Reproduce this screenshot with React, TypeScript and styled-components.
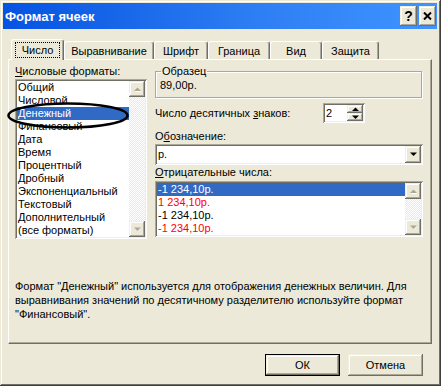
import React from "react"
import styled, { createGlobalStyle, css } from "styled-components"

const formats = [
    "Общий",
    "Числовой",
    "Денежный",
    "Финансовый",
    "Дата",
    "Время",
    "Процентный",
    "Дробный",
    "Экспоненциальный",
    "Текстовый",
    "Дополнительный",
    "(все форматы)",
]

const negatives = [
    { text: "-1 234,10р.", red: false },
    { text: "1 234,10р.", red: true },
    { text: "-1 234,10р.", red: false },
    { text: "-1 234,10р.", red: true },
]

const tabs = [
    { label: "Число", width: 53 },
    { label: "Выравнивание", width: 90 },
    { label: "Шрифт", width: 54 },
    { label: "Граница", width: 62 },
    { label: "Вид", width: 52 },
    { label: "Защита", width: 57 },
]

const Arrow = ({ dir, disabled }: { dir: "up" | "down"; disabled?: boolean }) => (
    <svg width="7" height="5" viewBox="0 0 7 5">
        {disabled && (
            <path
                d={dir === "up" ? "M1 5 L4 2 L7 5 Z" : "M1 1 L7 1 L4 4 Z"}
                fill="#fff"
            />
        )}
        <path
            d={dir === "up" ? "M0 4 L3.5 0.5 L7 4 Z" : "M0 0.5 L7 0.5 L3.5 4 Z"}
            fill={disabled ? "#ACA899" : "#000"}
        />
    </svg>
)

const ScrollBar = () => (
    <Scroll>
        <ScrollButton><Arrow dir="up" disabled /></ScrollButton>
        <Track />
        <ScrollButton><Arrow dir="down" disabled /></ScrollButton>
    </Scroll>
)

export default function App() {
    return <>
        <GlobalStyle />
        <Window>
            <TitleBar>
                <Title>Формат ячеек</Title>
                <CaptionButtons>
                    <CaptionButton>?</CaptionButton>
                    <CaptionButton>
                        <svg width="9" height="8" viewBox="0 0 9 8">
                            <path d="M1 0.5 L8 7.5 M8 0.5 L1 7.5" stroke="#000" strokeWidth="2" />
                        </svg>
                    </CaptionButton>
                </CaptionButtons>
            </TitleBar>
            <Body>
                <TabsRow>
                    {tabs.map((t, i) => (
                        <Tab key={t.label} $w={t.width} $active={i === 0}>
                            {i === 0 ? <FocusLabel>{t.label}</FocusLabel> : t.label}
                        </Tab>
                    ))}
                </TabsRow>
                <Panel>
                    <Columns>
                        <LeftColumn>
                            <Label><u>Ч</u>исловые форматы:</Label>
                            <FormatList>
                                <Items>
                                    {formats.map((f, i) => (
                                        <Item key={f} $selected={i === 2}>{f}</Item>
                                    ))}
                                </Items>
                                <ScrollBar />
                            </FormatList>
                            <Circle width="124" height="30" viewBox="0 0 124 30">
                                <ellipse cx="62" cy="14.5" rx="59.5" ry="12" fill="none" stroke="#000" strokeWidth="2.6" />
                            </Circle>
                        </LeftColumn>
                        <RightColumn>
                            <Sample>
                                <Legend>Образец</Legend>
                                <SampleText>89,00р.</SampleText>
                            </Sample>
                            <DecimalRow>
                                <Label>Число десятичных <u>з</u>наков:</Label>
                                <Spinner>
                                    <SpinValue>2</SpinValue>
                                    <SpinButtons>
                                        <SpinButton><Arrow dir="up" /></SpinButton>
                                        <SpinButton><Arrow dir="down" /></SpinButton>
                                    </SpinButtons>
                                </Spinner>
                            </DecimalRow>
                            <Label $top={7}>О<u>б</u>означение:</Label>
                            <Combo>
                                <ComboValue>р.</ComboValue>
                                <DropButton><Arrow dir="down" /></DropButton>
                            </Combo>
                            <Label $top={1}><u>О</u>трицательные числа:</Label>
                            <NegativeList>
                                <Items>
                                    {negatives.map((n, i) => (
                                        <Item key={i} $selected={i === 0} $red={n.red}>{n.text}</Item>
                                    ))}
                                </Items>
                                <ScrollBar />
                            </NegativeList>
                        </RightColumn>
                    </Columns>
                    <Description>
                        Формат "Денежный" используется для отображения денежных величин. Для<br />
                        выравнивания значений по десятичному разделителю используйте формат<br />
                        "Финансовый".
                    </Description>
                </Panel>
            </Body>
            <ButtonRow>
                <DialogButton $default>ОК</DialogButton>
                <DialogButton>Отмена</DialogButton>
            </ButtonRow>
        </Window>
    </>
}

const GlobalStyle = createGlobalStyle`
    html, body {
        margin: 0;
        padding: 0;
        background: #fff;
    }
    body {
        font-family: "Liberation Sans", Arial, sans-serif;
        font-size: 11px;
        color: #000;
    }
    #root {
        width: 441px;
        height: 388px;
        overflow: hidden;
    }
`

const raised = css`
    background: #ECE9D8;
    box-shadow: inset -1px -1px 0 #716F64, inset 1px 1px 0 #F1EFE2, inset -2px -2px 0 #ACA899, inset 2px 2px 0 #fff;
`

const sunken = css`
    background: #fff;
    box-shadow: inset 1px 1px 0 #ACA899, inset -1px -1px 0 #fff, inset 2px 2px 0 #716F64, inset -2px -2px 0 #F1EFE2;
`

const Window = styled.div`
    width: 441px;
    height: 386px;
    box-sizing: border-box;
    padding: 3px 4px 4px 3px;
    background: #ECE9D8;
    box-shadow: inset -1px -1px 0 #404040, inset 1px 1px 0 #ECE9D8, inset -2px -2px 0 #716F64, inset 2px 2px 0 #fff;
    display: flex;
    flex-direction: column;
`

const TitleBar = styled.div`
    height: 26px;
    flex-shrink: 0;
    display: flex;
    align-items: center;
    justify-content: space-between;
    background: linear-gradient(to right, #0553E1, #2F7FF4 60%, #3F94FF);
`

const Title = styled.div`
    padding-left: 2px;
    color: #fff;
    font-weight: bold;
    font-size: 13px;
`

const CaptionButtons = styled.div`
    display: flex;
    gap: 2px;
    padding-right: 1px;
`

const CaptionButton = styled.div`
    ${raised};
    width: 17px;
    height: 20px;
    display: flex;
    align-items: center;
    justify-content: center;
    font-weight: bold;
    font-size: 14px;
`

const Body = styled.div`
    display: flex;
    flex-direction: column;
    padding-left: 5px;
`

const TabsRow = styled.div`
    margin-top: 10px;
    height: 20px;
    display: flex;
    align-items: flex-end;
    padding-left: 3px;
    position: relative;
    z-index: 1;
`

const Tab = styled.div<{ $w: number; $active?: boolean }>`
    width: ${p => p.$w}px;
    height: ${p => (p.$active ? 21 : 18)}px;
    margin-bottom: ${p => (p.$active ? -1 : 0)}px;
    box-sizing: border-box;
    background: #ECE9D8;
    border-top: 1px solid #fff;
    border-left: 1px solid #fff;
    border-right: 1px solid #716F64;
    box-shadow: inset -1px 0 0 #ACA899;
    border-radius: 3px 3px 0 0;
    display: flex;
    align-items: ${p => (p.$active ? "flex-start" : "center")};
    padding-top: ${p => (p.$active ? 2 : 0)}px;
    justify-content: center;
    white-space: nowrap;
`

const FocusLabel = styled.span`
    padding: 0 6px;
    line-height: 14px;
    border: 1px dotted #000;
`

const Panel = styled.div`
    width: 424px;
    height: 285px;
    box-sizing: border-box;
    border-top: 1px solid #fff;
    border-left: 1px solid #fff;
    border-right: 1px solid #716F64;
    border-bottom: 1px solid #716F64;
    box-shadow: inset -1px -1px 0 #ACA899;
    padding: 5px 0 0 6px;
    display: flex;
    flex-direction: column;
`

const Columns = styled.div`
    display: flex;
    gap: 8px;
`

const LeftColumn = styled.div`
    width: 132px;
    display: flex;
    flex-direction: column;
    position: relative;
`

const RightColumn = styled.div`
    width: 268px;
    display: flex;
    flex-direction: column;
`

const Label = styled.div<{ $top?: number }>`
    height: 13px;
    line-height: 13px;
    margin-top: ${p => p.$top ?? 0}px;
    white-space: nowrap;
`

const ListBox = styled.div`
    ${sunken};
    box-sizing: border-box;
    padding: 2px;
    display: flex;
`

const FormatList = styled(ListBox)`
    margin-top: 1px;
    height: 160px;
`

const NegativeList = styled(ListBox)`
    margin-top: 2px;
    height: 56px;
`

const Items = styled.div`
    flex: 1;
    display: flex;
    flex-direction: column;
    overflow: hidden;
`

const Item = styled.div<{ $selected?: boolean; $red?: boolean }>`
    height: 13px;
    flex-shrink: 0;
    line-height: 13px;
    padding-left: 1px;
    white-space: nowrap;
    color: ${p => (p.$selected ? "#fff" : p.$red ? "#FF0000" : "#000")};
    background: ${p => (p.$selected ? "#316AC5" : "transparent")};
`

const Scroll = styled.div`
    width: 16px;
    display: flex;
    flex-direction: column;
`

const ScrollButton = styled.div`
    ${raised};
    height: 16px;
    flex-shrink: 0;
    display: flex;
    align-items: center;
    justify-content: center;
`

const Track = styled.div`
    flex: 1;
    background-color: #fff;
    background-image: repeating-conic-gradient(#ECE9D8 0 25%, #fff 0 50%);
    background-size: 2px 2px;
`

const Circle = styled.svg`
    position: absolute;
    left: -9px;
    top: 36px;
    pointer-events: none;
`

const Sample = styled.fieldset`
    margin: 0;
    padding: 0 0 5px 4px;
    width: 267px;
    box-sizing: border-box;
    border: 1px solid #ACA899;
    box-shadow: inset 1px 1px 0 #fff, 1px 1px 0 #fff;
    min-inline-size: 0;
`

const Legend = styled.legend`
    padding: 0 1px;
    margin-left: 1px;
    line-height: 13px;
`

const SampleText = styled.div`
    height: 13px;
    line-height: 13px;
    margin-top: 1px;
`

const DecimalRow = styled.div`
    margin-top: 5px;
    height: 20px;
    display: flex;
    align-items: center;
    & > ${Label} {
        width: 168px;
    }
`

const Spinner = styled.div`
    ${sunken};
    width: 42px;
    height: 20px;
    box-sizing: border-box;
    padding: 2px;
    display: flex;
`

const SpinValue = styled.div`
    flex: 1;
    padding-left: 1px;
    line-height: 16px;
`

const SpinButtons = styled.div`
    width: 16px;
    display: flex;
    flex-direction: column;
`

const SpinButton = styled.div`
    ${raised};
    height: 8px;
    display: flex;
    align-items: center;
    justify-content: center;
`

const Combo = styled.div`
    ${sunken};
    margin-top: 1px;
    height: 21px;
    box-sizing: border-box;
    padding: 2px;
    display: flex;
`

const ComboValue = styled.div`
    flex: 1;
    padding-left: 1px;
    line-height: 17px;
`

const DropButton = styled.div`
    ${raised};
    width: 16px;
    display: flex;
    align-items: center;
    justify-content: center;
`

const Description = styled.div`
    margin-top: 40px;
    line-height: 14px;
    white-space: nowrap;
`

const ButtonRow = styled.div`
    margin-top: 10px;
    display: flex;
    justify-content: flex-end;
    gap: 8px;
    padding-right: 14px;
`

const DialogButton = styled.div<{ $default?: boolean }>`
    ${raised};
    width: 75px;
    height: 22px;
    box-sizing: border-box;
    display: flex;
    align-items: center;
    justify-content: center;
    ${p => p.$default && css`
        border: 1px solid #000;
    `}
`
